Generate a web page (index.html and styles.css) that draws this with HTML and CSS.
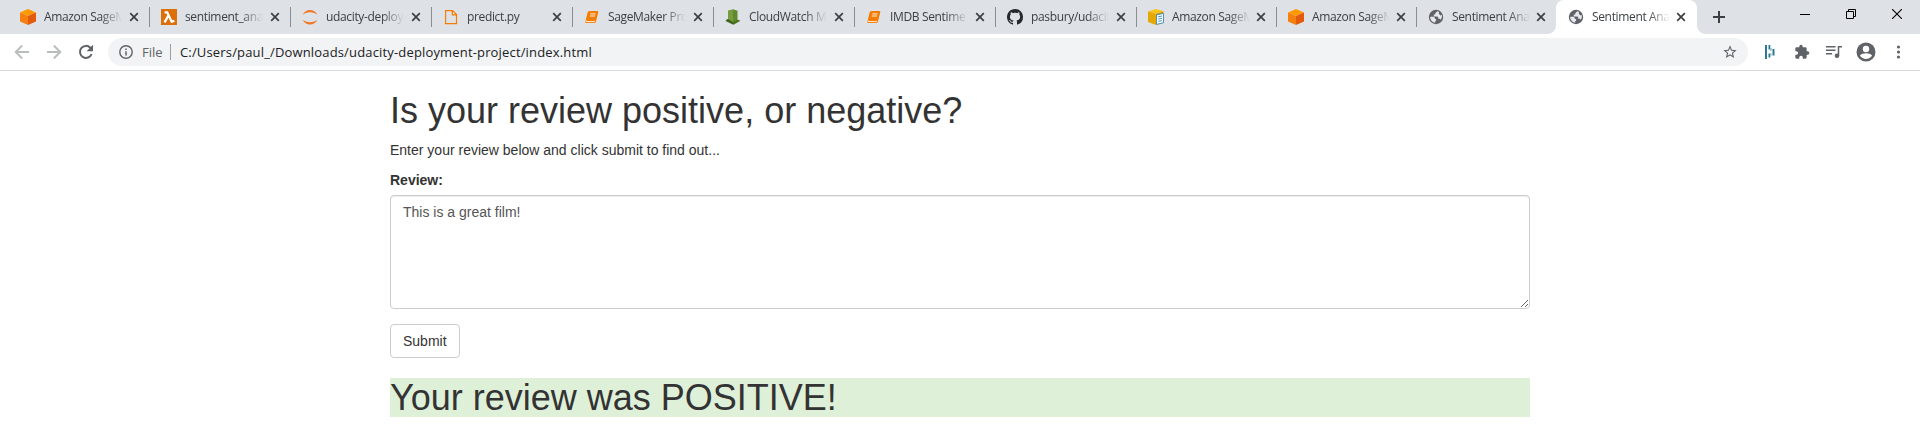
FILE: index.html
```html
<!DOCTYPE html>
<html lang="en">
<head>
<meta charset="utf-8">
<title>Sentiment Analysis Web App</title>
<link rel="stylesheet" href="styles.css">
</head>
<body>
<svg class="defs" width="0" height="0" aria-hidden="true">
  <symbol id="cube" viewBox="0 0 16 16"><path fill="#f90" d="M8 0l8 3.400L8 7 0 3.400z"/><path fill="#f58010" d="M0 3.400L8 7v9l-8-3.600z"/><path fill="#e25a0b" d="M16 3.400L8 7v9l8-3.600z"/></symbol>
  <symbol id="lambda" viewBox="0 0 16 16"><path fill="#dd6f08" d="M0 0h16v16H0z"/><path fill="none" stroke="#fff" stroke-width="2.300" d="M3.600 3.300h2.600l4.400 9.400 2.800-.8M7.200 6.800L3.600 13.400"/></symbol>
  <symbol id="jupyter" viewBox="0 0 16 16"><path fill="#f37726" d="M.7 5.800C2 2.700 4.800 1 8 1s6 1.700 7.300 4.800C13.500 4.200 11 3.300 8 3.300S2.500 4.200.7 5.800zM.7 10.700C2 13.800 4.800 15.500 8 15.500s6-1.700 7.300-4.800C13.500 12.300 11 13.200 8 13.200s-5.500-.9-7.300-2.500z"/></symbol>
  <symbol id="file" viewBox="0 0 16 16"><path fill="none" stroke="#f57c00" stroke-width="1.200" d="M2.600 1.600h7l3.900 3.900v9.200H2.600zM9.300 1.600v4.200h4.200"/></symbol>
  <symbol id="book" viewBox="0 0 16 16"><path fill="#f57c00" d="M5.400 2h7.900q1.300 0 1 1.100l-2.300 9.300q-.4 1.700-1.900 1.700H2.700Q1 14.100 1.400 12.500L3.600 3.500Q4 2 5.400 2z"/><path fill="none" stroke="#fff" stroke-width=".9" d="M6.300 4.900h5.200M5.800 7H11M2.300 11.400q-.3 1.200.7 1.200h7q.7 0 .9-.8"/></symbol>
  <symbol id="watch" viewBox="0 0 16 16"><path fill="#4b7223" d="M.5 11l7-2 8 2.800-7 4z"/><path fill="#759c3e" d="M3 1.500l5-1.300v13L3 12z"/><path fill="#5f8a2e" d="M8 .2l4.500 1.600v9L8 13.200z"/><path fill="#3f641c" d="M3 10l5 3v2.500L.5 12z"/></symbol>
  <symbol id="github" viewBox="0 0 16 16"><path fill="#24292e" d="M8 0C3.580 0 0 3.580 0 8c0 3.540 2.290 6.530 5.470 7.590.4.070.55-.17.55-.38 0-.19-.01-.82-.01-1.490-2.010.37-2.530-.49-2.690-.94-.09-.23-.48-.94-.82-1.130-.28-.15-.68-.52-.01-.53.63-.01 1.080.58 1.230.82.72 1.210 1.870.87 2.330.66.070-.52.28-.87.51-1.070-1.780-.2-3.640-.89-3.640-3.950 0-.87.31-1.590.82-2.150-.08-.2-.36-1.020.08-2.120 0 0 .67-.21 2.200.82.64-.18 1.320-.27 2-.27s1.360.09 2 .27c1.530-1.040 2.200-.82 2.200-.82.44 1.100.16 1.920.08 2.120.51.56.82 1.270.82 2.150 0 3.070-1.870 3.750-3.650 3.950.29.25.54.73.54 1.480 0 1.070-.01 1.930-.01 2.200 0 .21.15.46.55.38A8.010 8.010 0 0 0 16 8c0-4.420-3.580-8-8-8z"/></symbol>
  <symbol id="bucket" viewBox="0 0 16 16"><path fill="#f5c518" d="M0 2.500L8 0l7.500 2.300L8 4.800z"/><path fill="#e5a800" d="M0 2.500l8 2.300V16l-8-3z"/><path fill="#d69a00" d="M8 4.800l7.500-2.500V14L8 16z"/><path fill="#fff" stroke="#4a90c2" d="M8.500 5.900l7-1.500v9.300l-7 1.700z"/><path stroke="#4a90c2" d="M10.200 7.800l3.800-.8m-3.800 3.100l3.800-.8m-3.800 3.100l3.800-.8"/></symbol>
  <symbol id="globe" viewBox="0 0 16 16"><circle cx="8" cy="8" r="7.200" fill="#5f6368"/><path class="land" d="M9.300 2.300L7.300 4.300v1.300H5.800v1.900h3.400q1 0 1 1v1.300h1.600q.8.200.5 1.200C14.300 9 14.200 7 13.500 5.600q-.3 1.200-1.300.7L10.700 4.600q1-1.400-.4-2.100zM2.200 7.800h3.300q1.200.1 1.300 1.300v.9h1.300v1.900H7.200v1.900C4.100 13.400 2.200 10.900 2.200 7.800z"/></symbol>
  <symbol id="close" viewBox="0 0 10 10"><path fill="none" stroke="#3c4043" stroke-width="1.700" d="M1.200 1.200l7.600 7.600M8.800 1.200L1.200 8.800"/></symbol>
</svg>
<header class="browser">
  <div class="tabstrip">
    <div class="tab"><svg class="favicon"><use href="#cube"/></svg><span class="title">Amazon SageM</span><svg class="close"><use href="#close"/></svg></div>
    <div class="tab"><svg class="favicon"><use href="#lambda"/></svg><span class="title">sentiment_ana</span><svg class="close"><use href="#close"/></svg></div>
    <div class="tab"><svg class="favicon"><use href="#jupyter"/></svg><span class="title">udacity-deploy</span><svg class="close"><use href="#close"/></svg></div>
    <div class="tab"><svg class="favicon"><use href="#file"/></svg><span class="title">predict.py</span><svg class="close"><use href="#close"/></svg></div>
    <div class="tab"><svg class="favicon"><use href="#book"/></svg><span class="title">SageMaker Pro</span><svg class="close"><use href="#close"/></svg></div>
    <div class="tab"><svg class="favicon"><use href="#watch"/></svg><span class="title">CloudWatch M</span><svg class="close"><use href="#close"/></svg></div>
    <div class="tab"><svg class="favicon"><use href="#book"/></svg><span class="title">IMDB Sentime</span><svg class="close"><use href="#close"/></svg></div>
    <div class="tab"><svg class="favicon"><use href="#github"/></svg><span class="title">pasbury/udacit</span><svg class="close"><use href="#close"/></svg></div>
    <div class="tab narrow"><svg class="favicon"><use href="#bucket"/></svg><span class="title">Amazon SageM</span><svg class="close"><use href="#close"/></svg></div>
    <div class="tab narrow"><svg class="favicon"><use href="#cube"/></svg><span class="title">Amazon SageM</span><svg class="close"><use href="#close"/></svg></div>
    <div class="tab narrow before-active"><svg class="favicon"><use href="#globe"/></svg><span class="title">Sentiment Ana</span><svg class="close"><use href="#close"/></svg></div>
    <div class="tab narrow active"><svg class="favicon"><use href="#globe"/></svg><span class="title">Sentiment Ana</span><svg class="close"><use href="#close"/></svg></div>
    <svg class="newtab" viewBox="0 0 12 12"><path stroke="#3c4043" stroke-width="2" d="M6 0v12M0 6h12"/></svg>
    <div class="window-controls">
      <svg viewBox="0 0 10 10"><path stroke="#000" d="M0 5.500h10"/></svg>
      <svg viewBox="0 0 10 10"><path fill="none" stroke="#000" d="M.5 2.500h7v7h-7zM2.500 2.500v-2h7v7h-2"/></svg>
      <svg viewBox="0 0 10 10"><path stroke="#000" stroke-width="1.100" d="M0 0l10 10M10 0L0 10"/></svg>
    </div>
  </div>
  <div class="toolbar">
    <div class="nav">
      <svg viewBox="0 0 16 16"><path fill="none" stroke="#babcbe" stroke-width="1.900" d="M15 8H2M8.200 1.500L1.700 8l6.500 6.500"/></svg>
      <svg viewBox="0 0 16 16"><path fill="none" stroke="#babcbe" stroke-width="1.900" d="M1 8h13M7.800 1.500L14.300 8l-6.500 6.500"/></svg>
      <svg viewBox="0 0 16 16"><path fill="none" stroke="#5f6368" stroke-width="2" d="M13.600 10A6 6 0 1 1 12.300 3.700L14 5.500"/><path fill="#5f6368" d="M15 .8v6.400H8.600z"/></svg>
    </div>
    <div class="omnibox">
      <svg class="info" viewBox="0 0 14 14"><circle cx="7" cy="7" r="6.200" fill="none" stroke="#5f6368" stroke-width="1.400"/><path stroke="#5f6368" stroke-width="1.500" d="M7 6.200v4.300M7 3.500V5"/></svg>
      <span class="scheme">File</span>
      <span class="divider"></span>
      <span class="url">C:/Users/paul_/Downloads/udacity-deployment-project/index.html</span>
      <svg class="star" viewBox="0 0 24 24"><path fill="#5f6368" d="M22 9.240l-7.190-.62L12 2 9.190 8.630 2 9.240l5.460 4.730L5.820 21 12 17.270 18.180 21l-1.630-7.030L22 9.240zM12 15.400l-3.760 2.270 1-4.280-3.320-2.880 4.380-.38L12 6.100l1.710 4.040 4.380.38-3.320 2.880 1 4.280L12 15.400z"/></svg>
    </div>
    <div class="extensions">
      <svg viewBox="0 0 16 16"><path fill="#2c7a8f" d="M3 1h2v14H3zM6.500 1h1.800v4.500H6.500zM6.500 9.500h1.800v4H6.500zM10.500 5h2v6.500h-2z"/><path fill="#7fb3bf" d="M8.300 4h1.300v3H8.300zM8.300 9.500h1.300v2H8.300z"/></svg>
      <svg viewBox="0 0 24 24"><path fill="#5f6368" d="M20.500 11H19V7c0-1.100-.9-2-2-2h-4V3.500a2.500 2.500 0 0 0-5 0V5H4c-1.100 0-2 .9-2 2v3.800h1.500a2.700 2.700 0 0 1 0 5.400H2V20c0 1.100.9 2 2 2h3.800v-1.500a2.700 2.700 0 0 1 5.400 0V22H17c1.100 0 2-.9 2-2v-4h1.500a2.500 2.500 0 0 0 0-5z"/></svg>
      <svg viewBox="0 0 16 16"><path fill="none" stroke="#5f6368" stroke-width="1.500" d="M0 2.800h9.500M0 6.300h9.500M0 9.800h6M12.500 11.700V2.800H16"/><circle cx="11" cy="11.700" r="2.300" fill="#5f6368"/></svg>
      <svg class="avatar" viewBox="0 0 20 20"><circle cx="10" cy="10" r="9.500" fill="#5f6368"/><circle cx="10" cy="7" r="3.200" fill="#fff"/><path fill="#fff" d="M3.900 13.500C5 11.900 8 11.200 10 11.200s5 .7 6.100 2.300a7.200 7.200 0 0 1-12.200 0z"/></svg>
      <svg viewBox="0 0 16 16"><g fill="#5f6368"><circle cx="8.500" cy="3" r="1.600"/><circle cx="8.500" cy="8" r="1.600"/><circle cx="8.500" cy="13" r="1.600"/></g></svg>
    </div>
  </div>
</header>
<main class="container">
  <h1>Is your review positive, or negative?</h1>
  <p>Enter your review below and click submit to find out...</p>
  <form>
    <label for="review">Review:</label>
    <textarea id="review" class="form-control" rows="5">This is a great film!</textarea>
    <button type="button" class="btn">Submit</button>
  </form>
  <h1 class="result">Your review was POSITIVE!</h1>
</main>
</body>
</html>
```
FILE: styles.css
```css
* { box-sizing: border-box; }
body {
  margin: 0;
  overflow: hidden;
  background: #fff;
  color: #333;
  font: 14px/20px "Liberation Sans", Arial, sans-serif;
}
.defs { display: block; }
svg { flex: none; }

.browser {
  height: 71px;
  border-bottom: 1px solid #d8dadc;
  font-family: "Open Sans", "Noto Sans", sans-serif;
}
.tabstrip {
  display: flex;
  height: 34px;
  padding-left: 9px;
  background: #dee1e6;
}
.tab {
  position: relative;
  display: flex;
  flex: none;
  align-items: center;
  width: 141px;
  padding-left: 11px;
}
.tab.narrow { width: 140px; }
.tab::after {
  content: "";
  position: absolute;
  top: 7px;
  right: 0;
  width: 1px;
  height: 20px;
  background: #8a8d91;
}
.before-active::after,
.active::after { display: none; }
.favicon { width: 16px; height: 16px; }
.land { fill: #e6e8eb; }
.title {
  width: 80px;
  margin-left: 8px;
  white-space: nowrap;
  color: #3c4043;
  font-size: 12px;
  line-height: 18px;
  letter-spacing: -0.35px;
  -webkit-mask-image: linear-gradient(to right, #000 56px, transparent 78px);
  mask-image: linear-gradient(to right, #000 56px, transparent 78px);
}
.close { width: 10px; height: 10px; margin-left: 5px; }
.narrow .close { margin-left: 4px; }
.tab.active {
  width: 141px;
  margin-left: -1px;
  padding-left: 12px;
  background: #fff;
  border-radius: 8px 8px 0 0;
}
.active::before {
  content: "";
  position: absolute;
  bottom: 0;
  left: -8px;
  right: -8px;
  height: 8px;
  background:
    radial-gradient(circle at 0 0, transparent 7.5px, #fff 8px) left / 8px 8px no-repeat,
    radial-gradient(circle at 100% 0, transparent 7.5px, #fff 8px) right / 8px 8px no-repeat;
}
.newtab { width: 12px; height: 12px; margin: 11px 0 0 16px; }
.window-controls {
  display: flex;
  gap: 36px;
  margin: 9px 18px 0 auto;
}
.window-controls svg { width: 10px; height: 10px; }

.toolbar {
  display: flex;
  align-items: center;
  height: 36px;
  padding: 0 14px;
  background: #fff;
}
.nav { display: flex; gap: 16px; width: 94px; }
.nav svg { width: 16px; height: 16px; }
.omnibox {
  display: flex;
  align-items: center;
  width: 1640px;
  height: 28px;
  padding: 0 10px 0 11px;
  border-radius: 14px;
  background: #f1f3f4;
  font-size: 13px;
}
.info { width: 14px; height: 14px; }
.scheme { width: 20px; margin-left: 9px; color: #5f6368; }
.divider { width: 1px; height: 16px; margin-left: 8px; background: #9aa0a6; }
.url {
  margin-left: 9px;
  color: #202124;
  letter-spacing: 0.16px;
  white-space: nowrap;
}
.star { width: 16px; height: 16px; margin-left: auto; }
.extensions {
  display: flex;
  align-items: center;
  gap: 16px;
  margin-left: 14px;
}
.extensions svg { width: 16px; height: 16px; }
.extensions .avatar { width: 20px; height: 20px; margin: 0 -2px; }

.container { width: 1140px; margin: 0 auto; padding-top: 20px; }
h1 {
  margin: 0 0 10px;
  font-size: 36px;
  font-weight: 500;
  line-height: 39px;
}
p { margin: 0 0 10px; }
form { display: flex; flex-direction: column; align-items: flex-start; }
label { margin-bottom: 5px; font-weight: 700; }
.form-control {
  width: 100%;
  height: 114px;
  margin: 0 0 15px;
  padding: 6px 12px;
  border: 1px solid #ccc;
  border-radius: 4px;
  box-shadow: inset 0 1px 1px rgba(0, 0, 0, .075);
  color: #555;
  font: inherit;
}
.btn {
  height: 34px;
  padding: 6px 12px;
  border: 1px solid #ccc;
  border-radius: 4px;
  background: #fff;
  color: #333;
  font: inherit;
}
.result { margin-top: 20px; background: #dff0d8; }
```
